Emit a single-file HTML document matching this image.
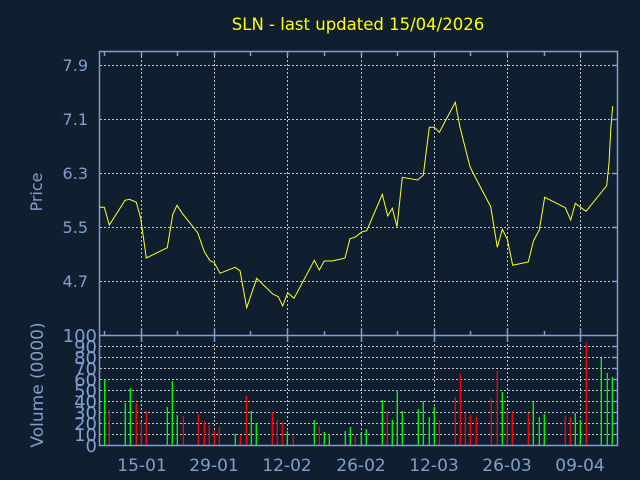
<!DOCTYPE html>
<html><head><meta charset="utf-8"><style>
html,body{margin:0;padding:0;background:#101f30;}
svg{display:block;}
text{font-family:"DejaVu Sans","Liberation Sans",sans-serif;}
</style></head><body>
<svg width="640" height="480" viewBox="0 0 640 480" xmlns="http://www.w3.org/2000/svg">
<rect width="640" height="480" fill="#101f30"/>
<text x="358" y="30" fill="#ffff00" font-size="16.5" text-anchor="middle">SLN - last updated 15/04/2026</text>
<g stroke="#c8c8c8" stroke-width="1" stroke-dasharray="2,2" fill="none">
<path d="M100 65.5H617M100 119.5H617M100 173.5H617M100 227.5H617M100 281.5H617"/>
<path d="M141.5 52V445M214.5 52V445M287.5 52V445M361.5 52V445M434.5 52V445M507.5 52V445M580.5 52V445"/>
<path d="M100 346.5H617M100 357.5H617M100 368.5H617M100 379.5H617M100 390.5H617M100 401.5H617M100 412.5H617M100 423.5H617M100 434.5H617"/>
</g>
<g stroke-width="1.3">
<g stroke="#00ff00">
<path d="M104.7 445V379M125.3 445V403M130.3 445V388M167.3 445V407M172.3 445V381M177.3 445V415M235.3 445V434M251.3 445V411M256.3 445V423M287.3 445V431M314.3 445V420M324.3 445V432M329.3 445V434M345.3 445V431M350.3 445V427M361.3 445V433M366.3 445V429M382.3 445V400M392.3 445V420M397.3 445V390M402.3 445V411M418.3 445V409M423.3 445V401M429.3 445V417M434.3 445V407M502.3 445V392M533.3 445V402M539.3 445V417M544.3 445V414M575.3 445V413M580.3 445V420M601.3 445V358M607.3 445V373M612.3 445V377"/>
</g>
<g stroke="#ff0000">
<path d="M109.3 445V410M136.3 445V403M141.3 445V422M146.3 445V411M183.3 445V416M198.3 445V414M204.3 445V421M209.3 445V425M214.3 445V431M219.3 445V427M240.3 445V435M246.3 445V396M272.3 445V412M277.3 445V420M282.3 445V422M293.3 445V436M319.3 445V426M355.3 445V436M387.3 445V411M439.3 445V420M455.3 445V397M460.3 445V374M465.3 445V413M470.3 445V415M476.3 445V417M491.3 445V398M497.3 445V371M507.3 445V411M512.3 445V411M528.3 445V413M565.3 445V416M570.3 445V417M586.3 445V343"/>
</g>
</g>
<g stroke="#7f9fcc" stroke-width="1.5" fill="none">
<path d="M99.5 51.5H617.5V445.5H99.5Z"/>
<path d="M99.5 335.5H617.5"/>
<path d="M104.5 52v4M177.5 52v4M250.5 52v4M324.5 52v4M397.5 52v4M470.5 52v4M544.5 52v4M141.5 52v4M214.5 52v4M287.5 52v4M361.5 52v4M434.5 52v4M507.5 52v4M580.5 52v4"/>
<path d="M104.5 335v-4M177.5 335v-4M250.5 335v-4M324.5 335v-4M397.5 335v-4M470.5 335v-4M544.5 335v-4M141.5 328v14M214.5 328v14M287.5 328v14M361.5 328v14M434.5 328v14M507.5 328v14M580.5 328v14"/>
<path d="M612 65.5h5M612 119.5h5M612 173.5h5M612 227.5h5M612 281.5h5M612 346.5h5M612 357.5h5M612 368.5h5M612 379.5h5M612 390.5h5M612 401.5h5M612 412.5h5M612 423.5h5M612 434.5h5"/>
</g>
<polyline fill="none" stroke="#ffff22" stroke-width="1" points="99.7,207.3 104.3,207.3 109.3,225 125,200.3 129.3,199.3 136.3,202.3 140.7,218.3 146.3,258 167.3,247.7 172.7,214.7 177,205.3 182.7,214 197.7,232.7 204.3,251.7 210,260.7 214.3,262.7 220,273.3 235,267.3 240,270.7 246.7,307.7 256.7,278.3 272.7,294 278.3,296.7 282.7,306 287.7,292.7 294,298.3 314.3,260.3 319.3,270 324.3,261 331.7,261 340,259.3 345,258 350,238.7 355,237.3 361.7,232 366.7,230.7 382.3,194.3 387.7,216 392.3,208.3 397,226.7 402.3,177.3 417.7,180 423.3,175 429.3,127.3 434.3,127.3 439.3,132.3 455.3,102.3 460,127.3 470,166.7 476.7,180 490.7,206.7 497.3,247.3 502.3,229.3 507.3,239.3 512.7,265.3 528.3,262 533.3,241.3 539.3,230 544.7,197.3 565.3,207.7 570.7,220 575.3,203.3 586,211.3 606.7,185.7 609,163.3 610.7,130 612.7,106"/>
<g fill="#7f9fcc" font-size="16" text-anchor="end">
<text x="88" y="71">7.9</text>
<text x="88" y="125">7.1</text>
<text x="88" y="179">6.3</text>
<text x="88" y="233">5.5</text>
<text x="88" y="287">4.7</text>
</g>
<g fill="#7f9fcc" font-size="18" text-anchor="end">
<text x="97" y="342">100</text>
<text x="97" y="353">90</text>
<text x="97" y="364">80</text>
<text x="97" y="375">70</text>
<text x="97" y="386">60</text>
<text x="97" y="397">50</text>
<text x="97" y="408">40</text>
<text x="97" y="419">30</text>
<text x="97" y="430">20</text>
<text x="97" y="441">10</text>
<text x="97" y="452">0</text>
</g>
<g fill="#7f9fcc" font-size="17" text-anchor="middle">
<text x="142" y="471">15-01</text>
<text x="214" y="471">29-01</text>
<text x="287" y="471">12-02</text>
<text x="361" y="471">26-02</text>
<text x="434" y="471">12-03</text>
<text x="507" y="471">26-03</text>
<text x="580" y="471">09-04</text>
</g>
<g fill="#7f9fcc" text-anchor="middle">
<text transform="translate(42,192) rotate(-90)" font-size="16">Price</text>
<text transform="translate(43,385) rotate(-90)" font-size="17">Volume (0000)</text>
</g>
</svg>
</body></html>
